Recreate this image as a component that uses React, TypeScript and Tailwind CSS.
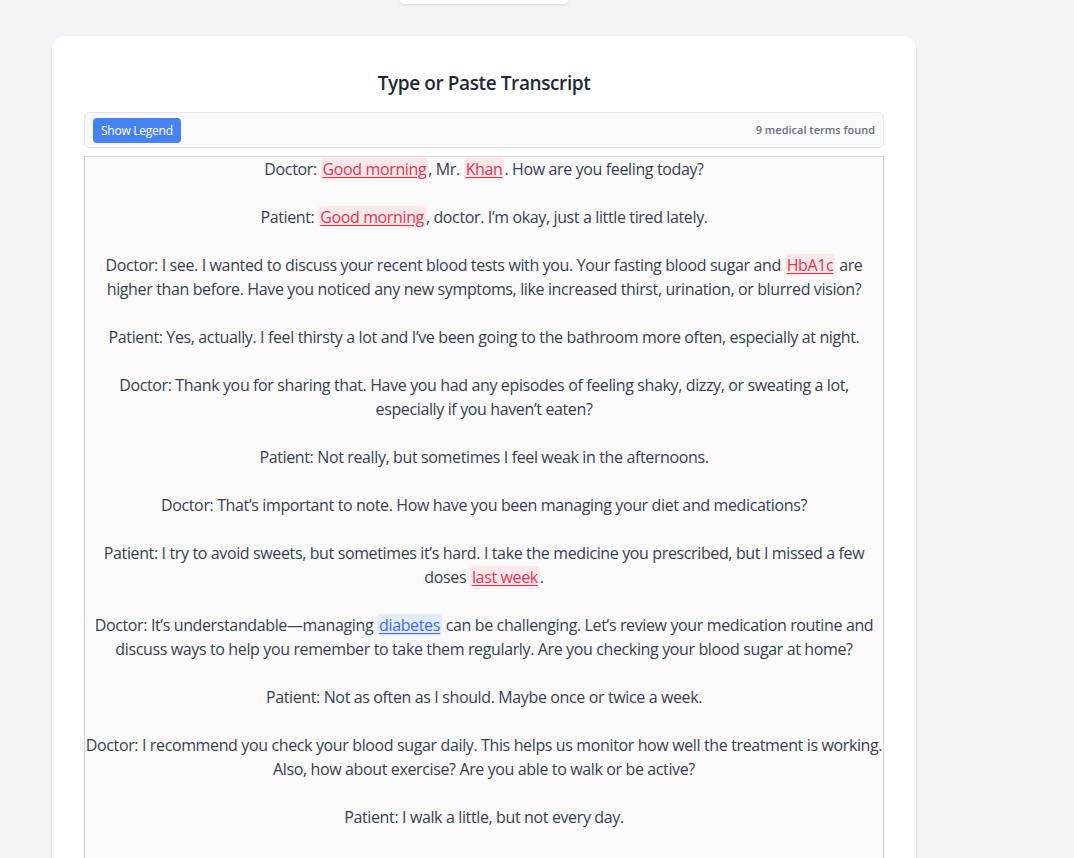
import React from 'react';

type Seg = string | { t: string; kind: 'red' | 'blue' };

const paragraphs: Seg[][] = [
  ['Doctor: ', { t: 'Good morning', kind: 'red' }, ', Mr. ', { t: 'Khan', kind: 'red' }, '. How are you feeling today?'],
  ['Patient: ', { t: 'Good morning', kind: 'red' }, ', doctor. I’m okay, just a little tired lately.'],
  [
    'Doctor: I see. I wanted to discuss your recent blood tests with you. Your fasting blood sugar and ',
    { t: 'HbA1c', kind: 'red' },
    ' are higher than before. Have you noticed any new symptoms, like increased thirst, urination, or blurred vision?',
  ],
  ['Patient: Yes, actually. I feel thirsty a lot and I’ve been going to the bathroom more often, especially at night.'],
  ['Doctor: Thank you for sharing that. Have you had any episodes of feeling shaky, dizzy, or sweating a lot, especially if you haven’t eaten?'],
  ['Patient: Not really, but sometimes I feel weak in the afternoons.'],
  ['Doctor: That’s important to note. How have you been managing your diet and medications?'],
  ['Patient: I try to avoid sweets, but sometimes it’s hard. I take the medicine you prescribed, but I missed a few doses ', { t: 'last week', kind: 'red' }, '.'],
  [
    'Doctor: It’s understandable—managing ',
    { t: 'diabetes', kind: 'blue' },
    ' can be challenging. Let’s review your medication routine and discuss ways to help you remember to take them regularly. Are you checking your blood sugar at home?',
  ],
  ['Patient: Not as often as I should. Maybe once or twice a week.'],
  ['Doctor: I recommend you check your blood sugar daily. This helps us monitor how well the treatment is working. Also, how about exercise? Are you able to walk or be active?'],
  ['Patient: I walk a little, but not every day.'],
  ['Doctor: Even a short walk after meals can help lower your blood sugar. Let’s set a goal of 30 minutes a day.'],
  ['Patient: Okay, I will try.'],
];

const Term: React.FC<{ t: string; kind: 'red' | 'blue' }> = ({ t, kind }) => (
  <span
    className={
      kind === 'red'
        ? 'bg-[#fce7e9] text-[#e0384f] underline underline-offset-2 rounded-sm px-0.5'
        : 'bg-[#e3ebfb] text-[#3a6ee8] underline underline-offset-2 rounded-sm px-0.5'
    }
  >
    {t}
  </span>
);

export default function App() {
  return (
    <div className="min-h-screen bg-[#f3f4f6] font-['Open_Sans',sans-serif] overflow-hidden">
      <div className="w-[864px] ml-[52px]">
        <div className="mx-auto w-[168px] h-[4px] bg-white rounded-b-xl shadow-sm" />
        <div className="mt-8 bg-white rounded-xl shadow-sm px-8 pt-8 h-[900px]">
          <h2 className="text-center text-[19px] font-semibold tracking-[-0.4px] text-[#1f2937] leading-7 pt-px">Type or Paste Transcript</h2>
          <div className="mt-[15px] flex items-center justify-between bg-[#f8f9fb] border border-[#e5e7eb] rounded-md px-2 h-9">
            <button className="bg-[#4782f3] text-white text-[12px] tracking-[-0.25px] rounded px-2 h-[25px] mt-px">Show Legend</button>
            <span className="text-[11px] font-semibold text-[#6b7280]">9 medical terms found</span>
          </div>
          <div className="mt-2 border border-[#d4d6dc] bg-[#fafafb] px-0 text-center text-[16px] tracking-[-0.37px] leading-6 text-[#374151]">
            {paragraphs.map((p, i) => (
              <p key={i} className="mb-6">
                {p.map((s, j) => (typeof s === 'string' ? <React.Fragment key={j}>{s}</React.Fragment> : <Term key={j} {...s} />))}
              </p>
            ))}
          </div>
        </div>
      </div>
    </div>
  );
}
